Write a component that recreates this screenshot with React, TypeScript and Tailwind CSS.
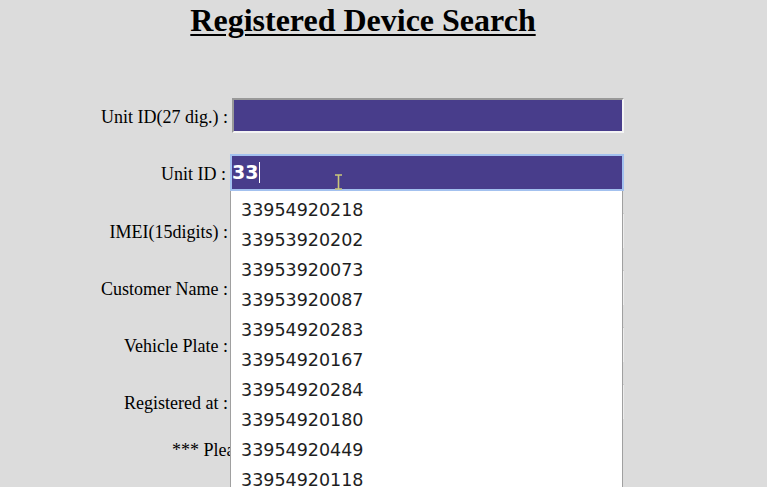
import React from "react";

const serif = { fontFamily: '"Liberation Serif", "Times New Roman", serif' };
const sans = { fontFamily: '"DejaVu Sans", Verdana, sans-serif' };

const suggestions = [
  "33954920218",
  "33953920202",
  "33953920073",
  "33953920087",
  "33954920283",
  "33954920167",
  "33954920284",
  "33954920180",
  "33954920449",
  "33954920118",
];

const fields = ["IMEI(15digits) :", "Customer Name :", "Vehicle Plate :", "Registered at :"];

const IBeam = () => (
  <svg width="9" height="16" viewBox="0 0 9 16" className="absolute left-[102px] top-[18px]">
    <path d="M1 1h7M1 15h7M4.5 1v14" stroke="#c9c77a" strokeWidth="1.6" fill="none" />
  </svg>
);

export default function App() {
  return (
    <div className="h-[487px] w-full overflow-hidden bg-[#dcdcdc] text-black" style={serif}>
      <div className="w-[726px]">
        <h1 className="pt-[3px] text-center text-[32px] font-bold leading-[34px] underline decoration-2 underline-offset-[3px]">
          Registered Device Search
        </h1>

        <div className="ml-[92px] mt-[61px] grid grid-cols-[136px_392px] gap-x-[4px] gap-y-[22px] text-[18px]">
          <div className="flex h-[35px] items-center justify-end whitespace-nowrap pt-[3px]">Unit ID(27 dig.) :</div>
          <div className="h-[35px] border-2 border-t-[#999] border-l-[#999] border-b-[#f4f4f4] border-r-[#f4f4f4] bg-[#483d8b]" />

          <div className="flex h-[35px] items-center justify-end whitespace-nowrap pt-[3px] pr-[2px]">Unit ID :</div>
          <div className="relative z-10 -ml-[2px] h-[37px] -mt-[1px]">
            <div className="relative flex h-full items-center border-2 border-[#a3c1ef] bg-[#483d8b] text-[19px] font-bold text-white" style={sans}>
              33
              <span className="ml-[1px] h-[21px] w-px bg-white" />
              <IBeam />
            </div>
            <div className="absolute left-0 top-full h-[320px] w-[393px] border-x border-[#a0a0a0] bg-white pt-[4px] text-[17.5px] text-[#1e1e1e]" style={sans}>
              {suggestions.map((s) => (
                <div key={s} className="flex h-[30px] items-center pl-[10px]">
                  {s}
                </div>
              ))}
            </div>
          </div>

          {fields.map((f) => (
            <React.Fragment key={f}>
              <div className="flex h-[35px] items-center justify-end whitespace-nowrap pt-[3px]">{f}</div>
              <div className="h-[35px] border-2 border-t-[#aaa] border-l-[#aaa] border-b-[#f0f0f0] border-r-[#ececec] bg-[#ececec]" />
            </React.Fragment>
          ))}

          <div className="col-span-2 -mt-[4px] whitespace-nowrap pl-[80px]">*** Please input at least one search condition ***</div>
        </div>
      </div>
    </div>
  );
}
